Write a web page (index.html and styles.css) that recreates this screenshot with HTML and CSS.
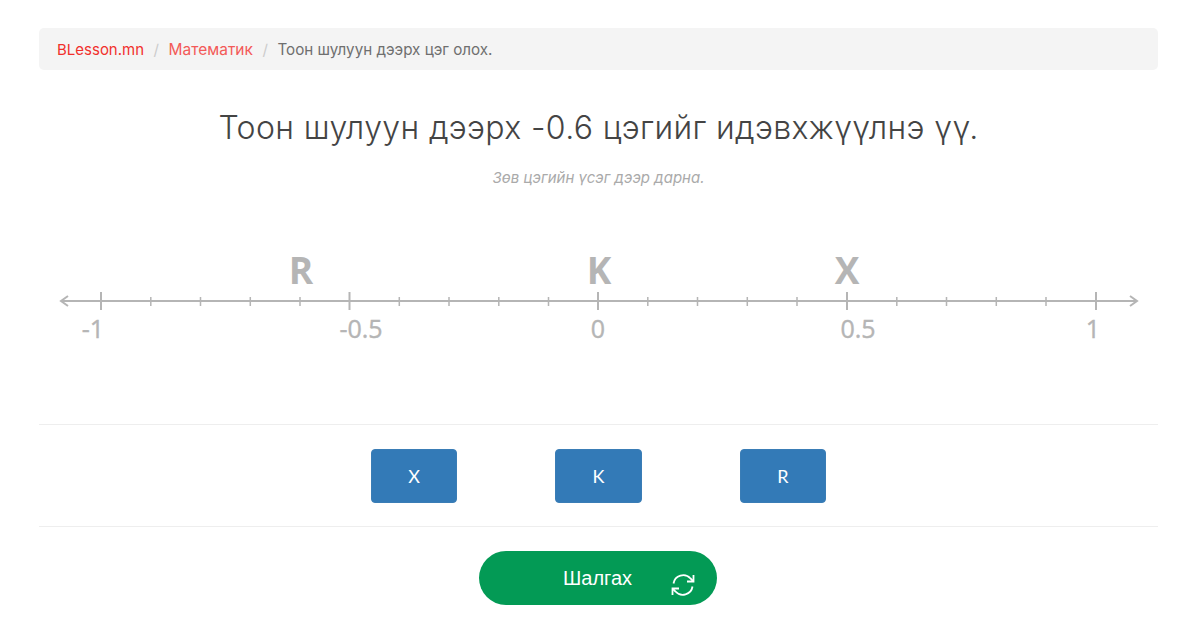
FILE: index.html
```html
<!DOCTYPE html>
<html lang="mn">
<head>
<meta charset="utf-8">
<title>Тоон шулуун дээрх цэг олох.</title>
<link rel="stylesheet" href="styles.css">
</head>
<body>
<main class="page">
  <nav class="crumbs">
    <a class="crumb-home" href="#">BLesson.mn</a>
    <span class="sep">/</span>
    <a class="crumb-link" href="#">Математик</a>
    <span class="sep">/</span>
    <span class="crumb-current">Тоон шулуун дээрх цэг олох.</span>
  </nav>
  <h1 class="title">Тоон шулуун дээрх -0.6 цэгийг идэвхжүүлнэ үү.</h1>
  <p class="hint">Зөв цэгийн үсэг дээр дарна.</p>
  <section class="figure">
    <svg class="line" width="1119" height="130" viewBox="0 0 1119 130" aria-label="Тоон шулуун">
      <g class="axis">
        <path d="M22 65H1098M29 60l-7 5 7 5M1091 60l7 5-7 5"/>
        <path d="M62 56v18M310.500 56v18M559 56v18M808 56v18M1057 56v18"/>
        <path d="M111.800 61v9M161.500 61v9M211.300 61v9M261 61v9M360.300 61v9M410 61v9M459.800 61v9M509.500 61v9M608.800 61v9M658.500 61v9M708.300 61v9M758 61v9M857.800 61v9M907.500 61v9M957.300 61v9M1007 61v9"/>
      </g>
      <g class="pt">
        <text x="262" y="48">R</text>
        <text x="560" y="48">K</text>
        <text x="808" y="48">X</text>
      </g>
      <g class="num">
        <text x="54" y="102">-1</text>
        <text x="322" y="102">-0.5</text>
        <text x="559" y="102">0</text>
        <text x="819" y="102">0.5</text>
        <text x="1054" y="102">1</text>
      </g>
    </svg>
  </section>
  <div class="choices">
    <button class="choice" type="button">X</button>
    <button class="choice" type="button">K</button>
    <button class="choice" type="button">R</button>
  </div>
  <div class="actions">
    <button class="check" type="button">
      <span>Шалгах</span>
      <svg class="check-icon" width="26" height="26" viewBox="0 0 26 26" aria-hidden="true">
        <path d="M3.500 11.500A9.800 9.800 0 0 1 20.500 6.500L23 9M22.500 14.500A9.800 9.800 0 0 1 5.500 19.500L3 17"/>
        <path d="M23.500 3v6.500H17M2.500 23v-6.500H9"/>
      </svg>
    </button>
  </div>
</main>
</body>
</html>
```
FILE: styles.css
```css
* { box-sizing: border-box; }
html, body { margin: 0; padding: 0; background: #fff; }
body { font-family: "Lato", "Inter", sans-serif; color: #444; overflow: hidden; }
.page { width: 1119px; margin-left: 39px; padding-top: 28px; }
.crumbs {
  height: 42px;
  display: flex;
  align-items: center;
  gap: 9.500px;
  padding: 0 18px;
  background: #f4f4f4;
  border-radius: 5px;
  font-size: 15.200px;
  font-family: "Inter", "Lato", sans-serif;
}
.crumbs a { text-decoration: none; }
.crumb-home { color: #f1302c; font-size: 15px; }
.crumb-link { color: #f35a58; font-size: 15.500px; }
.crumb-current { color: #6f6f6f; }
.sep { color: #ccc; }
.title {
  margin: 38px 0 0;
  height: 40px;
  line-height: 40px;
  text-align: center;
  font-family: "Inter", sans-serif;
  font-weight: 300;
  font-size: 32px;
  letter-spacing: 0.370px;
  color: #444;
}
.hint {
  margin: 20px 0 0;
  height: 20px;
  line-height: 20px;
  text-align: center;
  font-family: "Inter", sans-serif;
  font-style: italic;
  font-size: 15px;
  color: #aaa;
}
.figure { margin-top: 48px; height: 189px; border-bottom: 1px solid #eee; }
.line { display: block; }
.axis path { fill: none; stroke: #b5b5b5; stroke-width: 2; }
.axis path:nth-child(3) { stroke-width: 1.500; }
.pt text { fill: #b5b5b5; font-family: "Open Sans", sans-serif; font-weight: 700; font-size: 37px; text-anchor: middle; }
.num text { fill: #b5b5b5; stroke: #b5b5b5; stroke-width: 0.400; font-family: "Open Sans", sans-serif; font-size: 25px; text-anchor: middle; }
.choices {
  height: 102px;
  border-bottom: 1px solid #eee;
  display: flex;
  justify-content: center;
  align-items: center;
  gap: 98px;
}
.choice {
  width: 86.500px;
  height: 54px;
  background: #337ab7;
  border: 1px solid #3a7db6;
  border-radius: 4px;
  color: #fff;
  font-family: "Lato", sans-serif;
  font-size: 18px;
}
.actions { display: flex; justify-content: center; padding: 24px 2px 0 0; }
.check {
  position: relative;
  width: 238px;
  height: 54px;
  background: #039a55;
  border: none;
  border-radius: 27px;
  color: #fff;
  font-family: "Liberation Sans", sans-serif;
  font-size: 20px;
  padding: 0;
}
.check-icon { position: absolute; left: 191px; top: 21px; fill: none; stroke: #fff; stroke-width: 1.800; }
```
